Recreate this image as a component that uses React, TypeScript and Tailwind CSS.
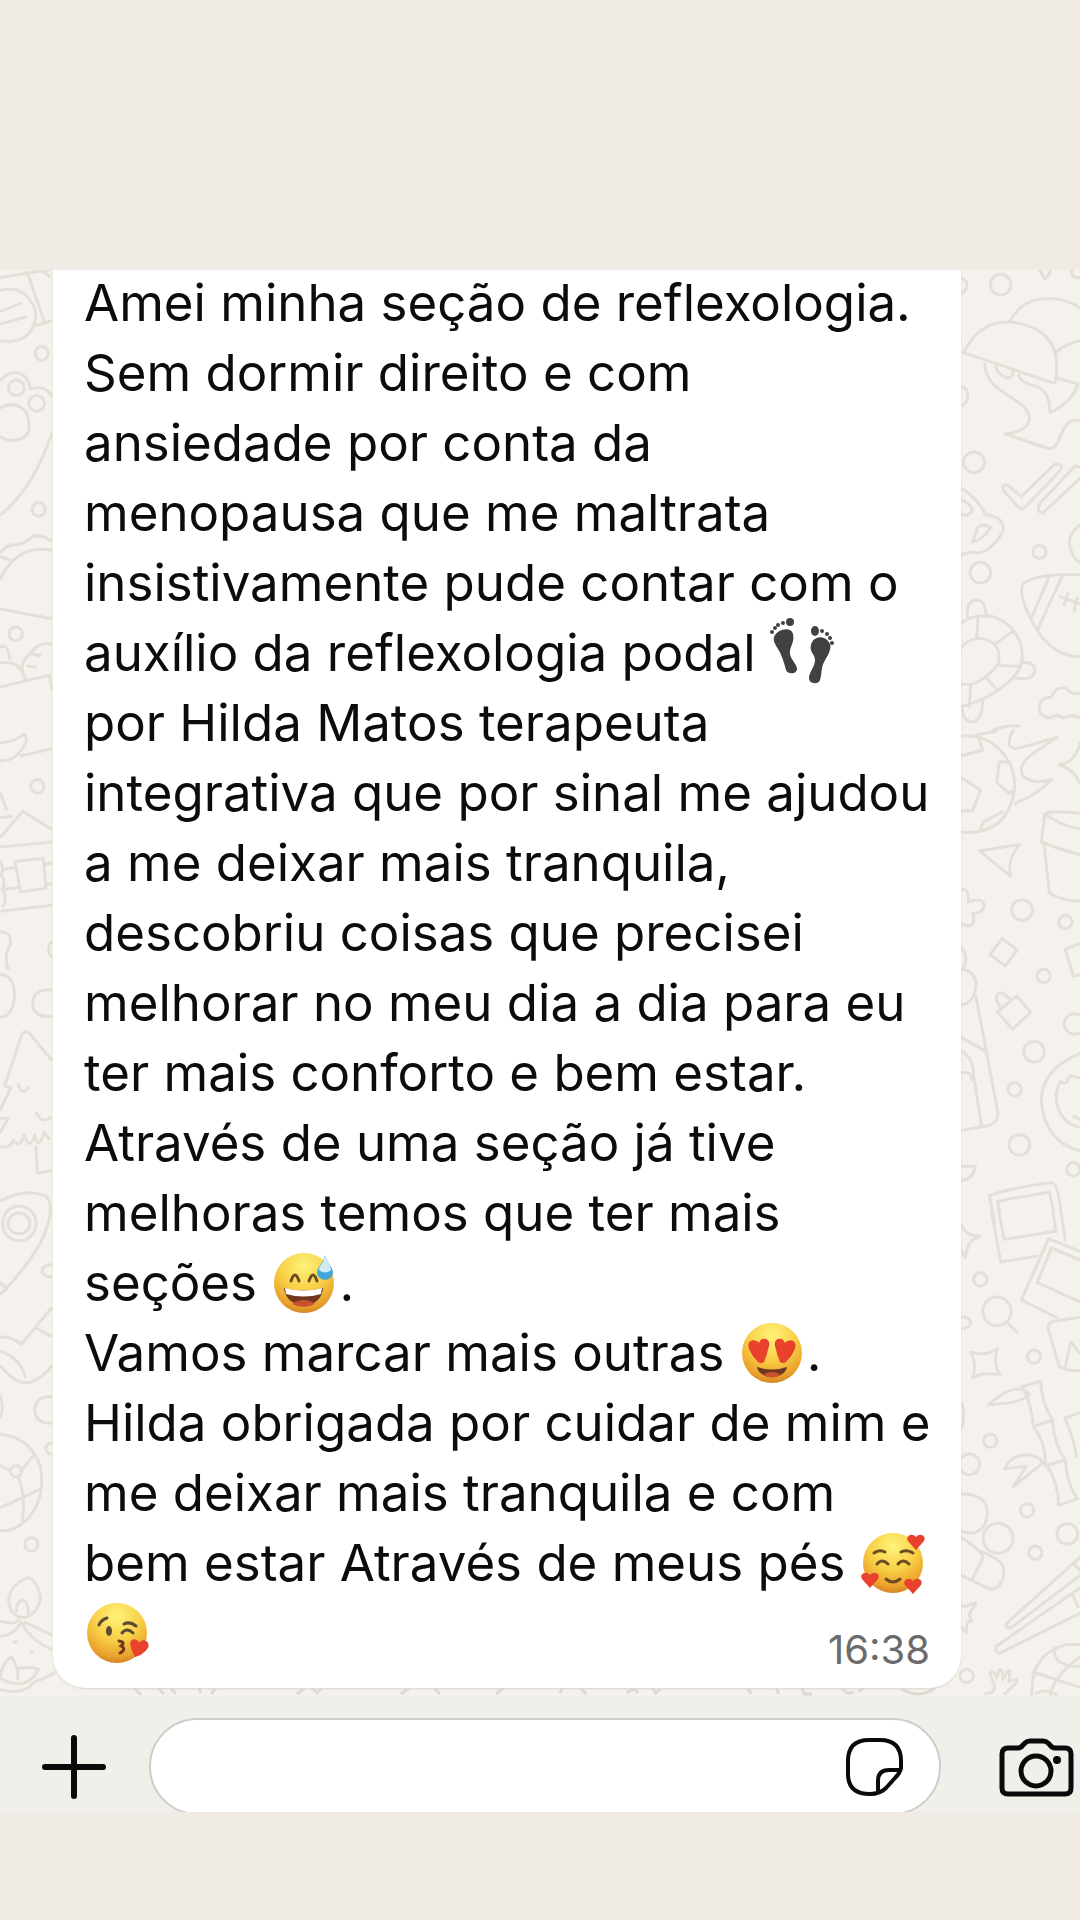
import React from 'react';

interface EmojiProps {
  label: string;
  children: React.ReactNode;
}

const HEART = 'M0 8 L-8 -1 C-11 -6 -4 -10 0 -5 C4 -10 11 -6 8 -1 Z';

const Emoji = ({ label, children }: EmojiProps) => {
  return (
    <svg
      className="inline-block h-[70px] w-[68px] shrink-0 overflow-visible align-top"
      viewBox="0 2 68 70"
      role="img"
      aria-label={label}
    >
      <defs>
        <radialGradient id="face" cx="50%" cy="22%" r="80%">
          <stop offset="0" stopColor="#fff37a" />
          <stop offset="0.5" stopColor="#f8cf45" />
          <stop offset="0.85" stopColor="#e9a02c" />
          <stop offset="1" stopColor="#cf7f22" />
        </radialGradient>
      </defs>
      <circle cx="33" cy="37" r="30" fill="url(#face)" />
      {children}
    </svg>
  );
};

const Footprints = () => {
  return (
    <svg
      className="inline-block h-[70px] w-[66px] align-top"
      viewBox="0 0 66 70"
      role="img"
      aria-label="pegadas"
      fill="#414141"
    >
      <path d="M4 19 C7 11 21 8 23 16 C25 25 19 29 20 36 C21 42 27 46 27 51 C27 56 18 57 16 52 C14 45 12 37 8 31 C5 26 3 23 4 19 Z" />
      <ellipse cx="20" cy="4" rx="4" ry="4" />
      <circle cx="13" cy="5" r="2" />
      <circle cx="8" cy="7" r="2" />
      <circle cx="5" cy="10" r="2" />
      <circle cx="2" cy="14" r="2" />
      <path d="M41 27 C43 18 55 16 60 26 C62 31 57 39 54 44 C51 50 52 56 50 62 C48 67 39 66 39 60 C39 54 45 49 45 42 C45 36 39 34 41 27 Z" />
      <ellipse cx="45" cy="13" rx="4" ry="5" />
      <circle cx="52" cy="13" r="2" />
      <circle cx="57" cy="16" r="2" />
      <circle cx="60" cy="20" r="2" />
      <circle cx="62" cy="25" r="2" />
    </svg>
  );
};

const SweatSmile = () => (
  <Emoji label="sorriso com suor">
    <path d="M20 35 Q24 23 28 35 M38 35 Q42 23 46 35" fill="none" stroke="#6b4d22" strokeWidth="3" strokeLinecap="round" />
    <path d="M13 42 Q33 47 52 42 C51 65 15 65 13 42 Z" fill="#713620" />
    <path d="M14 42 Q33 47 51 42 L50 48 Q33 53 15 48 Z" fill="#fff" />
    <path d="M21 58 Q33 50 44 58 Q33 64 21 58 Z" fill="#c9512f" />
    <path d="M54 9 C57 19 62 21 62 27 C61 36 47 36 46 27 C46 21 52 18 54 9 Z" fill="#43a5da" />
    <path d="M54 9 C57 17 60 20 60 24 Q54 29 48 24 C48 20 53 17 54 9 Z" fill="#cfe9f5" />
  </Emoji>
);

const HeartEyes = () => (
  <Emoji label="olhos de coração">
    <path d="M19 46 Q13 40 10 33 C7 24 16 22 20 27 C22 20 32 22 30 30 Q28 39 25 46 Q22 48 19 46 Z" fill="#e8412c" />
    <path d="M47 46 Q53 40 56 33 C59 24 50 22 46 27 C44 20 34 22 36 30 Q38 39 41 46 Q44 48 47 46 Z" fill="#e8412c" />
    <path d="M18 51 Q33 56 48 51 C46 64 20 64 18 51 Z" fill="#713620" />
    <path d="M24 59 Q33 53 42 59 Q33 64 24 59 Z" fill="#c9512f" />
  </Emoji>
);

const SmilingHearts = () => (
  <Emoji label="sorriso com corações">
    <path d="M14 27 Q19 23 25 26 M41 26 Q47 23 53 27 M17 38 Q22 32 28 38 M38 38 Q43 32 49 38 M26 53 Q33 59 40 53" fill="none" stroke="#6b4d22" strokeWidth="3" strokeLinecap="round" />
    <g fill="#e8412c">
      <path d={HEART} transform="translate(56 16)" />
      <path d={HEART} transform="translate(10 54)" />
      <path d={HEART} transform="translate(53 60)" />
    </g>
  </Emoji>
);

const KissHeart = () => (
  <Emoji label="beijo">
    <path d="M15 29 Q17 24 23 22 M40 28 Q46 25 52 30 M38 37 Q43 31 49 37" fill="none" stroke="#5c4b35" strokeWidth="3" strokeLinecap="round" />
    <ellipse cx="25" cy="35" rx="3" ry="5" fill="#5c4b35" />
    <path d="M35 45 Q42 46 37 50 Q43 53 36 57" fill="none" stroke="#713620" strokeWidth="3" strokeLinecap="round" />
    <path d="M51 61 Q47 54 46 48 C47 41 54 43 55 47 C59 41 67 46 64 52 Q59 59 51 61 Z" fill="#e8412c" />
  </Emoji>
);

const WallpaperLeft = () => {
  return (
    <svg className="absolute left-0 top-0 h-full w-[60px]" aria-hidden="true" fill="none" stroke="#e4e0d9" strokeWidth="3" strokeLinejoin="round">
      <g transform="translate(0 -20) scale(.3333 .4592)">
        <path vectorEffect="non-scaling-stroke" d="M0 60 L156 42 M80 45 L134 158 M100 166 L156 154 M128 45 L152 60 M162 68 L184 76" />
        <path vectorEffect="non-scaling-stroke" d="M0 88 Q50 78 84 103 Q120 135 100 165 Q80 205 0 198 M0 134 L65 115 M0 162 L80 145" />
        <path vectorEffect="non-scaling-stroke" d="M145 225 a20 15 0 1 1 -40 0 a20 15 0 1 1 40 0 M73 300 a24 17 0 1 1 -48 0 a24 17 0 1 1 48 0 M134 334 a24 17 0 1 1 -48 0 a24 17 0 1 1 48 0" />
        <path vectorEffect="non-scaling-stroke" d="M0 285 Q25 262 60 268 Q92 282 90 303 Q140 292 156 320 M0 344 Q50 325 80 355 Q100 400 65 410 Q30 420 0 406 M0 578 Q100 520 156 398" />
        <path vectorEffect="non-scaling-stroke" d="M136 565 a20 15 0 1 1 -40 0 a20 15 0 1 1 40 0 M0 660 Q20 640 50 642 Q76 640 100 622 Q130 622 156 634 M0 718 Q50 640 156 654 M0 668 L40 678 M0 782 L156 803" />
        <path vectorEffect="non-scaling-stroke" d="M67 836 a20 15 0 1 1 -40 0 a20 15 0 1 1 40 0 M0 865 Q25 855 30 893 M0 900 Q55 890 78 935 M78 935 Q50 905 90 878 Q120 850 156 860 M90 878 L124 884 M80 906 L110 908 M0 952 L148 926 L156 960" />
        <path vectorEffect="non-scaling-stroke" d="M0 1074 Q50 1070 72 1054 Q88 1064 68 1085 Q40 1115 0 1112 M60 1102 L156 1086 M132 1168 a20 15 0 1 1 -40 0 a20 15 0 1 1 40 0 M0 1180 L20 1220" />
        <path vectorEffect="non-scaling-stroke" d="M0 1280 L68 1222 L156 1262 M0 1236 L38 1233 M0 1300 L156 1289 M45 1331 L130 1325 L138 1390 L62 1398 Z M10 1348 L48 1345 M132 1338 L156 1335 M14 1392 L58 1388 M138 1382 L156 1380 M0 1440 L156 1427" />
        <path vectorEffect="non-scaling-stroke" d="M0 1330 Q14 1345 4 1360 Q20 1380 6 1392 Q25 1410 8 1432 M0 1485 Q40 1485 30 1515 Q10 1535 25 1568 M156 1505 Q135 1525 156 1540" />
      </g>
      <g transform="translate(0 700) scale(.3333 .4719)">
        <path vectorEffect="non-scaling-stroke" d="M0 100 Q40 100 44 50 Q40 10 0 10 M156 42 Q98 40 98 72 Q100 102 156 98" />
        <path vectorEffect="non-scaling-stroke" d="M0 298 L32 250 L14 245 L65 138 Q76 124 90 135 L156 192 M0 314 L24 315 L0 345 M0 374 Q30 380 40 360 Q60 380 72 350 Q90 385 104 350 Q115 385 132 345 L150 360 M54 240 Q65 270 86 248 M106 300 Q130 330 154 310 M108 372 L112 430 L156 425" />
        <path vectorEffect="non-scaling-stroke" d="M0 490 Q80 460 140 480 Q170 510 120 580 Q70 640 0 688 M0 662 L24 678 M108 537 a50 37 0 1 1 -100 0 a50 37 0 1 1 100 0 M90 537 a33 22 0 1 1 -66 0 a33 22 0 1 1 66 0 M156 624 Q125 626 126 638 Q130 650 156 650" />
        <path vectorEffect="non-scaling-stroke" d="M0 778 Q30 775 64 793 L156 715 M106 758 L156 777 M0 808 Q60 820 78 866 M0 838 Q50 880 90 874 Q130 865 156 838 M156 904 Q105 902 104 935 Q110 963 156 960 M0 900 Q14 930 0 950 M156 1002 Q134 1005 138 1016 Q145 1028 156 1025" />
        <path vectorEffect="non-scaling-stroke" d="M0 984 Q90 990 120 1050 Q140 1120 80 1165 Q40 1192 0 1188 M0 1050 L34 1062 M62 1062 L104 1026 M0 1140 L122 1100 M55 1075 Q80 1120 65 1175 M64 1062 a16 12 0 1 1 -32 0 a16 12 0 1 1 32 0 M114 1217 a20 14 0 1 1 -40 0 a20 14 0 1 1 40 0" />
        <path vectorEffect="non-scaling-stroke" d="M88 1287 Q30 1300 26 1335 Q30 1370 66 1372 Q110 1370 122 1330 Q115 1300 88 1287 M50 1362 Q46 1340 68 1335 Q88 1342 84 1365 M0 1380 Q50 1390 56 1375 M0 1412 Q40 1410 64 1382 Q90 1420 156 1440 M72 1382 Q130 1400 156 1410 M38 1424 h14 M88 1445 h14" />
        <path vectorEffect="non-scaling-stroke" d="M0 1500 Q5 1470 34 1456 Q60 1480 52 1505 M54 1480 Q90 1475 116 1482 Q90 1515 50 1512 Q20 1510 0 1500 M0 1525 Q50 1535 88 1520 L98 1510 Q140 1500 165 1488" />
      </g>
    </svg>
  );
};

const WallpaperRight = () => {
  return (
    <svg className="absolute right-0 top-0 h-full w-[130px]" aria-hidden="true" fill="none" stroke="#e4e0d9" strokeWidth="9" strokeLinejoin="round" strokeLinecap="round">
      <g transform="translate(0 -20) scale(.3333)">
        <circle cx="152" cy="104" r="31" />
        <path d="M30 82 Q55 92 50 110 Q45 130 30 128 M270 62 L282 84 Q290 90 302 62 M366 58 Q360 84 390 84" />
        <path d="M180 212 Q220 140 310 146 Q360 150 390 175 M40 308 Q90 210 180 216 Q330 230 320 370 L314 400 Z M318 306 Q350 280 390 272 M322 385 L384 402 Q370 455 300 488 Q300 410 240 404 Q205 390 206 376 M104 342 C110 440 240 440 238 510 Q230 545 166 552 L290 594 C340 612 320 500 390 512 M136 350 Q150 385 182 384 L190 366" />
        <path d="M30 408 Q56 415 54 440 Q50 465 30 466" />
        <circle cx="72" cy="637" r="31" />
        <path d="M162 724 Q152 702 174 706 L214 740 L308 648 Q325 634 336 652 Q336 660 226 770 Q214 782 204 770 Z M390 652 Q375 644 364 660 L270 760 Q256 785 278 790 L390 685" />
        <path d="M30 712 Q85 745 106 794 Q168 800 158 846 Q120 910 80 908 Q50 902 30 920 M30 748 Q70 765 66 784 Q55 800 30 792 M68 876 L84 830 Q100 820 122 832 Q100 870 68 876" />
        <circle cx="268" cy="906" r="20" />
        <circle cx="91" cy="968" r="31" />
        <path d="M390 825 Q355 850 358 885 Q370 930 390 938 M390 974 Q260 970 222 1000 C202 1020 225 1080 260 1138 Q310 1220 390 1220 M296 984 L246 1100 M336 980 L264 1136 M330 1040 L390 1062 M354 1030 L342 1066 M382 1044 L372 1084" />
        <path d="M52 1098 Q50 1050 80 1050 Q108 1052 108 1096 M30 1122 Q70 1090 130 1100 C190 1120 230 1180 212 1250 Q170 1330 30 1372 M30 1198 Q60 1160 98 1166 Q160 1180 144 1242 Q110 1290 62 1304 L30 1302 M84 1104 L80 1162 M184 1148 L140 1178 M148 1246 L212 1250 M106 1280 L138 1316 M62 1304 L58 1370 M218 1238 Q258 1235 254 1268 Q240 1296 192 1282 M36 1375 Q40 1420 74 1415 Q98 1400 98 1354" />
        <path d="M300 1404 Q266 1400 268 1370 Q275 1340 304 1342 Q320 1304 352 1318 Q366 1335 390 1330 M300 1404 Q320 1390 340 1404 Q365 1390 390 1404 M130 1440 Q170 1425 206 1428" />
      </g>
      <g transform="translate(0 460) scale(.3333)">
        <path d="M30 18 C130 8 200 90 194 180 Q170 320 30 306 M84 20 L98 60 L30 78 M30 140 L92 180 L68 242 H30 M180 96 H148 L140 158 L178 190 L194 180 M90 302 L100 276 L156 246 M140 4 L80 14" />
        <path d="M190 0 Q160 55 200 56 L322 22 L250 70 C180 120 220 170 304 150 Q260 195 196 220 M390 40 Q375 100 326 104 Q370 115 390 160" />
        <path d="M390 250 Q300 240 284 252 L274 336 Q320 355 390 374 M284 252 Q330 285 390 298 M282 346 L298 488 Q330 510 390 514 M88 362 L208 344 Q170 390 182 438 Z" />
        <path d="M36 478 Q60 480 54 516 Q100 500 102 526 Q100 552 68 550 Q80 585 54 588 L34 582" />
        <circle cx="216" cy="540" r="31" />
        <circle cx="346" cy="576" r="20" />
        <path d="M156 626 L202 660 L166 708 L120 674 Z M390 640 L346 658 L370 738 L390 734 M30 650 Q60 680 40 714 M30 718 Q80 722 78 770 Q70 825 30 824 M30 920 L104 962 M78 800 L144 1150 Q145 1180 110 1188 L30 1202 M30 962 Q70 980 70 1030 L94 1186 M30 1030 Q64 1020 66 1050" />
        <circle cx="281" cy="738" r="20" />
        <path d="M200 798 L242 846 L188 898 L142 846 Z M150 830 Q125 790 158 788 L178 806 M30 1310 L76 1308 Q70 1350 30 1352" />
        <circle cx="374" cy="882" r="31" />
        <circle cx="252" cy="965" r="31" />
        <circle cx="194" cy="1078" r="20" />
        <circle cx="208" cy="1245" r="31" />
        <circle cx="370" cy="1318" r="20" />
        <path d="M390 970 Q270 1020 274 1120 Q290 1240 390 1262 M332 1054 Q345 1065 352 1054 Q355 1036 368 1038 L390 1044 M332 1054 C300 1110 330 1180 390 1192 M372 1160 L390 1168" />
        <path d="M134 1480 L118 1396 Q200 1370 308 1358 Q322 1360 332 1440 M150 1450 L142 1414 L298 1386 L310 1440" />
      </g>
      <g transform="translate(0 940) scale(.3333)">
        <path d="M124 0 L152 156 L262 138 M146 0 L162 88 L318 64 L308 0 M332 0 L346 90 M390 124 L296 86 L214 270 L320 322 M390 150 L304 114 L262 218 L390 276 M390 322 L310 334 Q290 342 296 360 L326 464 Q330 482 390 482 M344 478 L362 396 L390 430" />
        <path d="M34 46 Q50 80 90 78 Q52 90 46 142 L32 120" />
        <circle cx="91" cy="208" r="20" />
        <circle cx="141" cy="304" r="43" />
        <path d="M172 338 L200 366 M30 320 Q62 320 62 340 Q55 358 30 356" />
        <path d="M62 426 Q105 440 142 416 Q128 460 150 496 Q100 484 68 504 Q82 460 62 426" />
        <circle cx="252" cy="440" r="20" />
        <circle cx="121" cy="692" r="20" />
        <circle cx="58" cy="763" r="31" />
        <path d="M216 530 L272 514 Q275 580 308 630 L250 650 Q245 580 216 530 M308 630 Q310 700 346 750 L286 768 Q290 700 250 650 M346 750 Q350 820 382 866 L326 886 Q325 820 292 768 M116 584 Q200 510 238 552 Q220 580 116 584 M164 776 C190 720 260 728 280 758 L190 830 L230 768 Z M390 608 L344 624 Q370 680 380 740 M36 580 Q48 620 34 656" />
        <path d="M30 852 Q112 850 112 910 Q108 968 60 970 L30 964" />
        <circle cx="144" cy="985" r="45" />
        <circle cx="231" cy="901" r="20" />
        <circle cx="352" cy="972" r="31" />
        <circle cx="256" cy="1028" r="20" />
        <path d="M30 980 Q110 1030 96 1050 L68 1104 M30 1094 L120 1138 C160 1140 180 1070 140 1048 L96 1024 M30 1184 L44 1190 L78 1178 L56 1216 L66 1232 L52 1236 L48 1268 L32 1250" />
        <path d="M390 1042 L170 1240 Q165 1262 188 1250 L390 1096 M370 1060 L390 1080 M390 1134 L140 1308 Q130 1330 152 1328 L390 1210 M366 1150 L384 1190" />
        <circle cx="50" cy="1398" r="20" />
        <path d="M106 1452 Q134 1450 134 1430 L120 1390 Q130 1376 140 1404 L148 1380 Q160 1376 158 1408 Q180 1370 180 1386 L176 1416 Q205 1400 200 1418 L164 1452" />
        <path d="M246 1454 Q240 1330 350 1304 L390 1304 M248 1386 L390 1432 M302 1454 Q310 1400 390 1340 M312 1316 Q310 1370 390 1370 M260 1450 Q290 1435 320 1454" />
      </g>
    </svg>
  );
};

// Bits of the doodles that peek out between the bubble and the composer
const WallpaperBottom = () => {
  return (
    <svg className="absolute bottom-0 left-0 h-2 w-full" aria-hidden="true" fill="none" stroke="#dedad3" strokeWidth="3">
      <path d="M134 0 l7 7 M158 0 l6 6 M171 0 l5 6 M199 0 l2 5 M216 0 l-5 6 M297 6 l8 -6 M312 0 l5 5 l4 -4 M401 6 l8 -6 M434 0 l6 6 M496 6 l7 -6 M562 0 l-2 5 M581 0 l5 6 M627 5 l6 -5 l5 5 M652 0 l4 5 l4 -4 M748 0 l3 6 M776 0 l3 6 M802 0 l2 6 h8 M842 0 q6 8 12 4 M858 4 l6 -4 M900 0 q18 12 35 0" />
    </svg>
  );
};

const MessageBubble = () => {
  return (
    <article className="relative -mt-0.5 mr-[119px] ml-[53px] rounded-b-[32px] bg-white px-[31px] pb-5 shadow-[0_1px_2px_#d9d5ce]">
      <p className="text-[51px] leading-[70px] whitespace-nowrap text-[#0c0c0c]">
        Amei minha seção de reflexologia.
        <br />
        Sem dormir direito e com
        <br />
        ansiedade por conta da
        <br />
        menopausa que me maltrata
        <br />
        insistivamente pude contar com o
        <br />
        auxílio da reflexologia podal <Footprints />
        <br />
        por Hilda Matos terapeuta
        <br />
        integrativa que por sinal me ajudou
        <br />
        a me deixar mais tranquila,
        <br />
        descobriu coisas que precisei
        <br />
        melhorar no meu dia a dia para eu
        <br />
        ter mais conforto e bem estar.
        <br />
        Através de uma seção já tive
        <br />
        melhoras temos que ter mais
        <br />
        seções <SweatSmile />.
        <br />
        Vamos marcar mais outras <HeartEyes />.
        <br />
        Hilda obrigada por cuidar de mim e
        <br />
        me deixar mais tranquila e com
        <br />
        bem estar Através de meus pés <SmilingHearts />
      </p>
      <div className="flex h-[70px] items-start justify-between">
        <KissHeart />
        <time className="pt-6 text-[40px] leading-[56px] text-[#6b6b6b]">16:38</time>
      </div>
    </article>
  );
};

const Composer = () => {
  return (
    <form className="flex h-[116px] items-start overflow-hidden bg-[#f0efea] pt-[22px]">
      <button type="button" aria-label="Anexar" className="flex h-[97px] w-[149px] shrink-0 items-center pl-[41px]">
        <svg className="h-[66px] w-[66px]" viewBox="0 0 66 66" fill="none" stroke="#0a0a0a" strokeWidth="6" strokeLinecap="round">
          <path d="M33 4 V62 M4 33 H62" />
        </svg>
      </button>
      <div className="relative flex-1">
        <input
          type="text"
          aria-label="Mensagem"
          className="block h-[97px] w-full rounded-full border-2 border-[#cfcdc9] bg-white pr-[110px] pl-10 text-[40px] outline-none"
        />
        <button type="button" aria-label="Figurinhas" className="absolute top-4 right-[33px]">
          <svg className="h-[66px] w-[66px]" viewBox="0 0 66 66" fill="none" stroke="#0a0a0a" strokeWidth="4" strokeLinejoin="round">
            <path d="M59 34 Q58 39 53 44 L44 54 Q38 60 28 60 Q6 60 6 40 V27 Q6 6 27 6 H38 Q59 6 59 27 Z" />
            <path d="M36 58 V47 Q36 36 47 36 H59" />
          </svg>
        </button>
      </div>
      <button type="button" aria-label="Câmera" className="flex h-[97px] w-[139px] shrink-0 items-center justify-end pr-1">
        <svg className="h-[64px] w-[78px]" viewBox="0 0 78 64" fill="none" stroke="#0a0a0a" strokeWidth="5" strokeLinejoin="round">
          <path d="M10 13 H20 Q23 13 25 10 L27 8 Q29 6 32 6 H45 Q48 6 50 8 L52 10 Q54 13 57 13 H67 Q73 13 73 19 V53 Q73 59 67 59 H10 Q4 59 4 53 V19 Q4 13 10 13 Z" />
          <circle cx="38" cy="36" r="15" />
          <circle cx="59" cy="25" r="4" fill="#0a0a0a" stroke="none" />
        </svg>
      </button>
    </form>
  );
};

export default function App() {
  return (
    <div className="min-h-screen bg-[#f0ebe4] pt-[270px] pb-[108px] font-['Inter','Noto_Sans',sans-serif]">
      <main className="relative overflow-hidden bg-[#f5f1ec] pb-2">
        <WallpaperLeft />
        <WallpaperRight />
        <WallpaperBottom />
        <MessageBubble />
      </main>
      <Composer />
    </div>
  );
}
